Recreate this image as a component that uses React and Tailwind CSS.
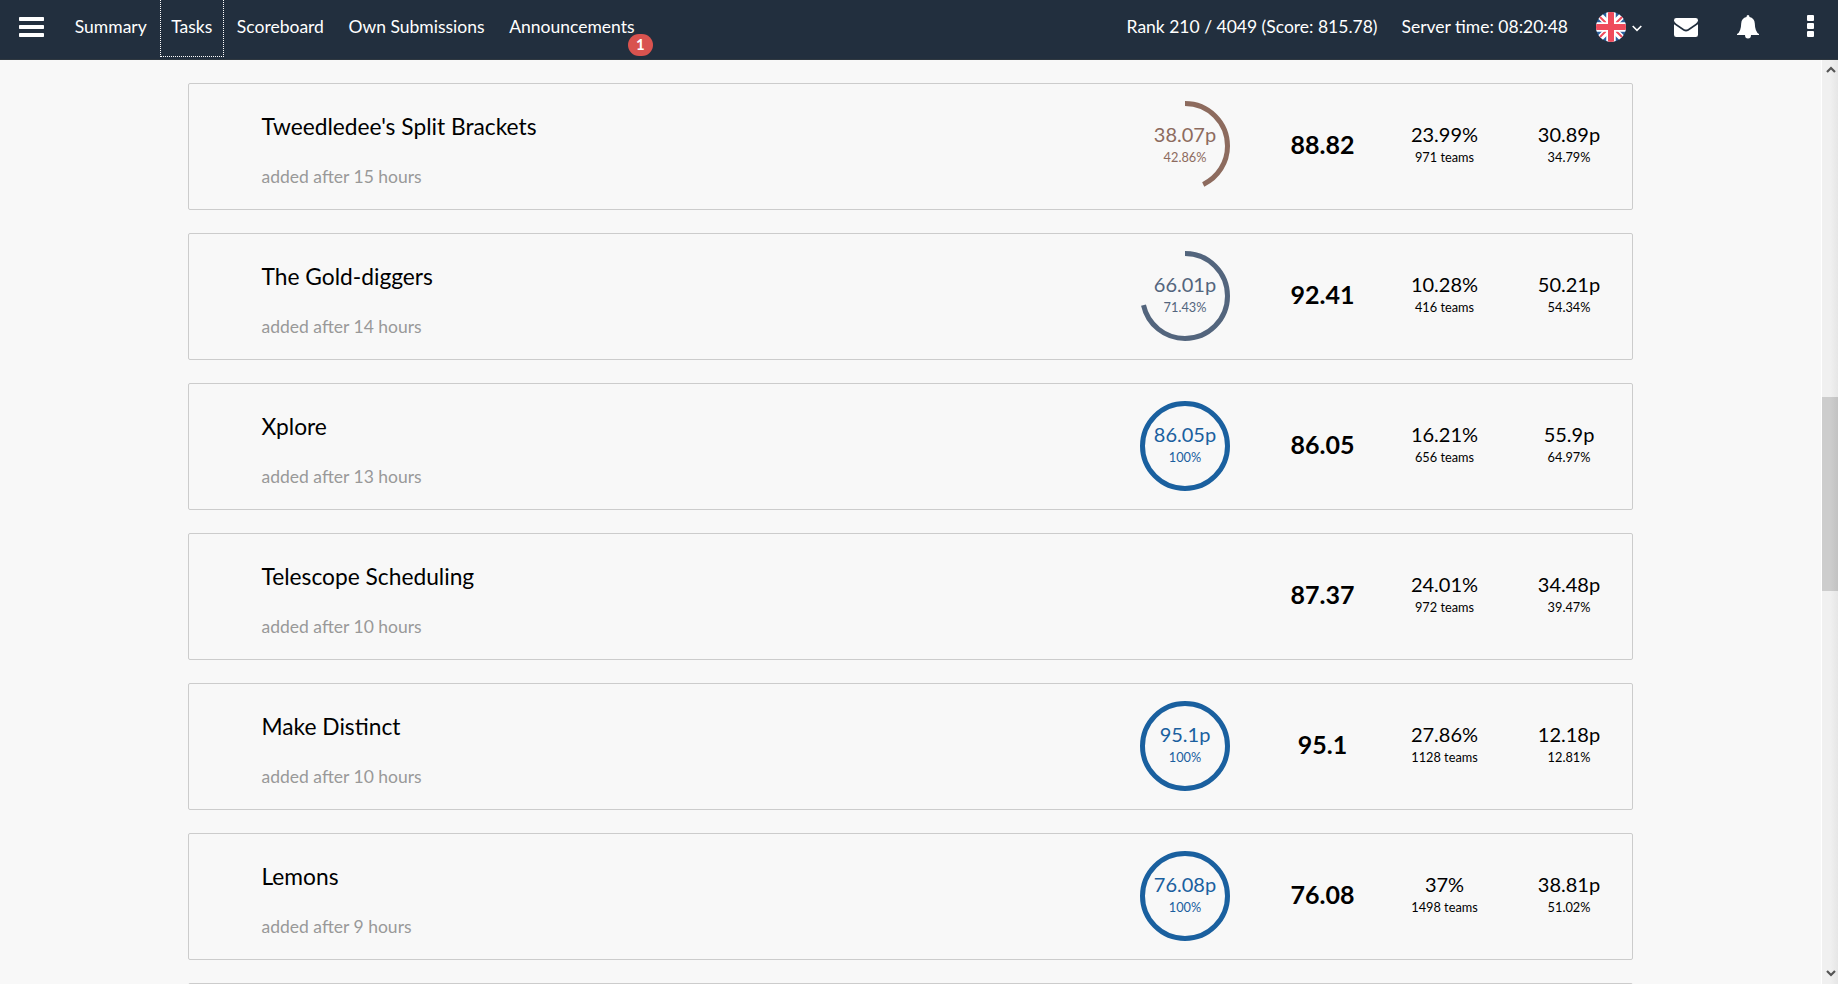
const tasks = [
  { name: "Tweedledee's Split Brackets", hours: 15, points: '38.07p', share: 42.86, color: '#8d6b5e', value: '88.82', solved: '23.99%', teams: 971, avg: '30.89p', avgShare: '34.79%' },
  { name: 'The Gold-diggers', hours: 14, points: '66.01p', share: 71.43, color: '#53657d', value: '92.41', solved: '10.28%', teams: 416, avg: '50.21p', avgShare: '54.34%' },
  { name: 'Xplore', hours: 13, points: '86.05p', share: 100, color: '#1a609f', value: '86.05', solved: '16.21%', teams: 656, avg: '55.9p', avgShare: '64.97%' },
  { name: 'Telescope Scheduling', hours: 10, value: '87.37', solved: '24.01%', teams: 972, avg: '34.48p', avgShare: '39.47%' },
  { name: 'Make Distinct', hours: 10, points: '95.1p', share: 100, color: '#1a609f', value: '95.1', solved: '27.86%', teams: 1128, avg: '12.18p', avgShare: '12.81%' },
  { name: 'Lemons', hours: 9, points: '76.08p', share: 100, color: '#1a609f', value: '76.08', solved: '37%', teams: 1498, avg: '38.81p', avgShare: '51.02%' },
];

function Flag() {
  return (
    <svg width="30" height="30" viewBox="0 0 30 30">
      <defs><clipPath id="round"><circle cx="15" cy="15" r="15" /></clipPath></defs>
      <g clipPath="url(#round)">
        <rect width="30" height="30" fill="#2a5f9e" />
        <path d="M0 0L30 30M30 0L0 30" stroke="#fff" strokeWidth="6.5" />
        <path d="M1 2L15 16M29 2L15 16M1 28L15 14M29 28L15 14" stroke="#ef4b5c" strokeWidth="2" />
        <path d="M15 0V30M0 15H30" stroke="#fff" strokeWidth="9.5" />
        <path d="M15 0V30M0 15H30" stroke="#ef4b5c" strokeWidth="6" />
      </g>
    </svg>
  );
}

function Ring({ share, color }) {
  const length = 2 * Math.PI * 42.5;
  return (
    <svg className="absolute inset-0" width="90" height="90" viewBox="0 0 90 90">
      <circle cx="45" cy="45" r="42.5" fill="none" stroke={color} strokeWidth="5"
        strokeDasharray={share === 100 ? undefined : `${(length * share) / 100} ${length}`}
        transform="rotate(-90 45 45)" />
    </svg>
  );
}

function Stat({ main, sub }) {
  return (
    <div className="flex flex-col items-center">
      <span className="text-[20px] leading-[24px]">{main}</span>
      <span className="mt-px text-[12.75px] leading-[20px]">{sub}</span>
    </div>
  );
}

function TaskCard({ task }) {
  return (
    <article className="flex h-[127px] shrink-0 rounded-[2px] border border-[#cccccc]">
      <div className="flex grow flex-col pl-[72.5px] pt-[28px]">
        <h2 className="text-[22.75px] leading-[30px]">{task.name}</h2>
        <p className="mt-[24px] text-[17.5px] leading-[22px] text-[#999999]">added after {task.hours} hours</p>
      </div>
      <div className="mr-[18px] mt-[17px] grid h-[90px] w-[90px] shrink-0">
        {task.points && (
          <div className="relative pt-[21px]" style={{ color: task.color }}>
            <Ring share={task.share} color={task.color} />
            <Stat main={task.points} sub={`${task.share}%`} />
          </div>
        )}
      </div>
      <div className="w-[149px] shrink-0 pt-[43px] text-center text-[25px] font-bold leading-[34px]">{task.value}</div>
      <div className="w-[95px] shrink-0 pt-[38px]"><Stat main={task.solved} sub={`${task.teams} teams`} /></div>
      <div className="ml-[14px] w-[126px] shrink-0 pt-[38px]"><Stat main={task.avg} sub={task.avgShare} /></div>
    </article>
  );
}

export default function App() {
  return (
    <div className="flex h-[984px] flex-col overflow-hidden bg-[#f8f8f8] font-[Lato,sans-serif] text-black">
      <header className="flex h-[60px] shrink-0 border-b border-[#2f3840] bg-[#222f3e] text-[17.5px] text-white">
        <svg className="ml-[19px] mt-[17px]" width="25" height="20" fill="#fff">
          <rect width="25" height="4" rx=".7" /><rect y="8" width="25" height="4" rx=".7" /><rect y="16" width="25" height="4" rx=".7" />
        </svg>
        <nav className="ml-[18.500px] flex h-[57px] leading-[54px]">
          <a className="pl-[12.3px] pr-[13px]">Summary</a>
          <a className="border border-t-0 border-dotted border-white px-[10.5px]">Tasks</a>
          <a className="pl-[13px] pr-[12.3px]">Scoreboard</a>
          <a className="px-[12.3px]">Own Submissions</a>
          <a className="relative px-[12.3px]">Announcements
            <span className="absolute right-[-6px] top-[34px] h-[22px] w-[25px] rounded-[11px] bg-[#d9534f] text-center text-[15px] font-bold leading-[21px]">1</span>
          </a>
        </nav>
        <div className="ml-auto flex leading-[54px]">
          <span>Rank 210 / 4049 (Score: 815.78)</span>
          <span className="ml-[24px]">Server time: 08:20:48</span>
        </div>
        <div className="ml-[28px] mt-[12px]"><Flag /></div>
        <svg className="ml-[6px] mt-[25px]" width="10" height="7" fill="none" stroke="#fff" strokeWidth="1.6"><path d="M.7 1L5 5.4L9.300 1" /></svg>
        <svg className="ml-[32px] mt-[18px]" width="24" height="19" fill="#fff">
          <path d="M0 2.300Q0 0 2.300 0H21.700Q24 0 24 2.300Q24 4 21.700 5.700L14 11Q12 12.200 10 11L2.300 5.700Q0 4 0 2.300Z" />
          <path d="M0 6.300L9.500 12.800Q12 14.300 14.500 12.800L24 6.300V16.700Q24 19 21.700 19H2.300Q0 19 0 16.700Z" />
        </svg>
        <svg className="ml-[39px] mt-[15px]" width="22" height="24" viewBox="0 0 22 24" fill="#fff">
          <path d="M11 0Q12.500 0 12.500 2Q17.500 3 17.800 8.500Q18 17 22 19V20H14Q14 23.500 11 23.500Q8 23.500 8 20H0V19Q4 17 4.200 8.500Q4.500 3 9.500 2Q9.500 0 11 0Z" />
        </svg>
        <svg className="ml-[48px] mr-[24px] mt-[15px]" width="7" height="22" fill="#fff">
          <rect width="7" height="6" rx="1" /><rect y="8" width="7" height="6" rx="1" /><rect y="16" width="7" height="6" rx="1" />
        </svg>
      </header>
      <div className="flex min-h-0 grow">
        <main className="flex grow flex-col gap-[23px] overflow-hidden pl-[188px] pr-[188px] pt-[23px]">
          {tasks.map((task) => <TaskCard key={task.name} task={task} />)}
          <div className="h-[127px] shrink-0 rounded-[2px] border border-[#cccccc]" />
        </main>
        <aside className="flex w-[17px] shrink-0 flex-col border-l border-white bg-linear-to-r from-[#f0f0f0] from-50% to-[#e6e6e6]">
          <svg className="ml-[4px] mt-[6px]" width="10" height="8" fill="none" stroke="#555" strokeWidth="2.200"><path d="M1 6L5 2L9 6" /></svg>
          <div className="mt-[323px] h-[194px] bg-linear-to-r from-[#cdcdcd] from-50% to-[#c2c2c2]" />
          <svg className="mb-[7px] ml-[4px] mt-auto" width="10" height="8" fill="none" stroke="#555" strokeWidth="2.200"><path d="M1 2L5 6L9 2" /></svg>
        </aside>
      </div>
    </div>
  );
}
